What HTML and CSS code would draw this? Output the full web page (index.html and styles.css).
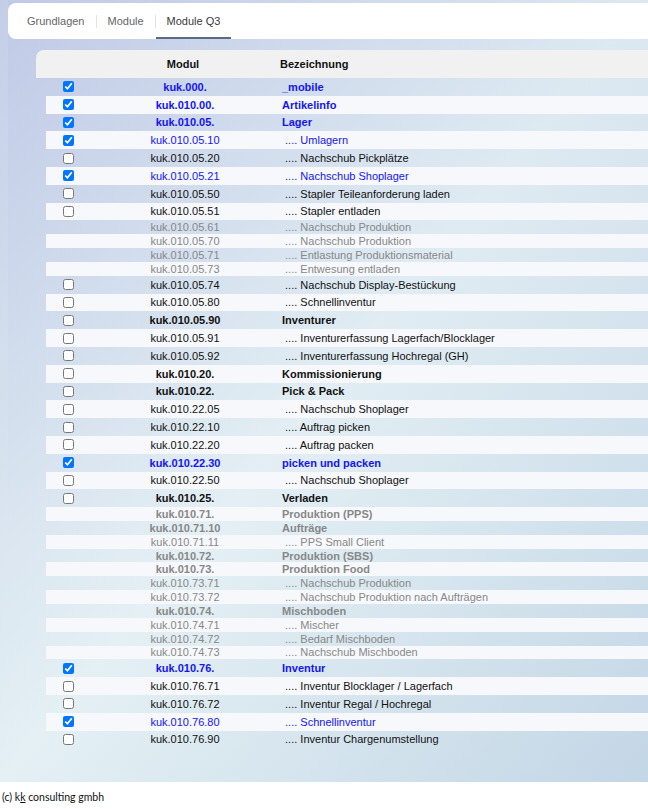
FILE: index.html
```html
<!DOCTYPE html>
<html lang="de">
<head>
<meta charset="utf-8">
<title>Module Q3</title>
<link rel="stylesheet" href="styles.css">
</head>
<body>
<div class="page">
  <div class="main">
    <nav class="tabs">
      <span class="tab">Grundlagen</span>
      <span class="sep"></span>
      <span class="tab">Module</span>
      <span class="sep"></span>
      <span class="tab active">Module Q3</span>
    </nav>

    <div class="thead">
      <div class="c1"></div>
      <div class="c2">Modul</div>
      <div class="c3">Bezeichnung</div>
    </div>

    <div class="tbody">
      <div class="row chk on b"><div class="c1"><input type="checkbox" checked></div><div class="c2">kuk.000.</div><div class="c3">_mobile</div></div>
      <div class="row chk on b"><div class="c1"><input type="checkbox" checked></div><div class="c2">kuk.010.00.</div><div class="c3">Artikelinfo</div></div>
      <div class="row chk on b"><div class="c1"><input type="checkbox" checked></div><div class="c2">kuk.010.05.</div><div class="c3">Lager</div></div>
      <div class="row chk on"><div class="c1"><input type="checkbox" checked></div><div class="c2">kuk.010.05.10</div><div class="c3">&nbsp;.... Umlagern</div></div>
      <div class="row chk"><div class="c1"><input type="checkbox"></div><div class="c2">kuk.010.05.20</div><div class="c3">&nbsp;.... Nachschub Pickplätze</div></div>
      <div class="row chk on"><div class="c1"><input type="checkbox" checked></div><div class="c2">kuk.010.05.21</div><div class="c3">&nbsp;.... Nachschub Shoplager</div></div>
      <div class="row chk"><div class="c1"><input type="checkbox"></div><div class="c2">kuk.010.05.50</div><div class="c3">&nbsp;.... Stapler Teileanforderung laden</div></div>
      <div class="row chk"><div class="c1"><input type="checkbox"></div><div class="c2">kuk.010.05.51</div><div class="c3">&nbsp;.... Stapler entladen</div></div>
      <div class="row off"><div class="c1"></div><div class="c2">kuk.010.05.61</div><div class="c3">&nbsp;.... Nachschub Produktion</div></div>
      <div class="row off"><div class="c1"></div><div class="c2">kuk.010.05.70</div><div class="c3">&nbsp;.... Nachschub Produktion</div></div>
      <div class="row off"><div class="c1"></div><div class="c2">kuk.010.05.71</div><div class="c3">&nbsp;.... Entlastung Produktionsmaterial</div></div>
      <div class="row off"><div class="c1"></div><div class="c2">kuk.010.05.73</div><div class="c3">&nbsp;.... Entwesung entladen</div></div>
      <div class="row chk"><div class="c1"><input type="checkbox"></div><div class="c2">kuk.010.05.74</div><div class="c3">&nbsp;.... Nachschub Display-Bestückung</div></div>
      <div class="row chk"><div class="c1"><input type="checkbox"></div><div class="c2">kuk.010.05.80</div><div class="c3">&nbsp;.... Schnellinventur</div></div>
      <div class="row chk b"><div class="c1"><input type="checkbox"></div><div class="c2">kuk.010.05.90</div><div class="c3">Inventurer</div></div>
      <div class="row chk"><div class="c1"><input type="checkbox"></div><div class="c2">kuk.010.05.91</div><div class="c3">&nbsp;.... Inventurerfassung Lagerfach/Blocklager</div></div>
      <div class="row chk"><div class="c1"><input type="checkbox"></div><div class="c2">kuk.010.05.92</div><div class="c3">&nbsp;.... Inventurerfassung Hochregal (GH)</div></div>
      <div class="row chk b"><div class="c1"><input type="checkbox"></div><div class="c2">kuk.010.20.</div><div class="c3">Kommissionierung</div></div>
      <div class="row chk b"><div class="c1"><input type="checkbox"></div><div class="c2">kuk.010.22.</div><div class="c3">Pick &amp; Pack</div></div>
      <div class="row chk"><div class="c1"><input type="checkbox"></div><div class="c2">kuk.010.22.05</div><div class="c3">&nbsp;.... Nachschub Shoplager</div></div>
      <div class="row chk"><div class="c1"><input type="checkbox"></div><div class="c2">kuk.010.22.10</div><div class="c3">&nbsp;.... Auftrag picken</div></div>
      <div class="row chk"><div class="c1"><input type="checkbox"></div><div class="c2">kuk.010.22.20</div><div class="c3">&nbsp;.... Auftrag packen</div></div>
      <div class="row chk on b"><div class="c1"><input type="checkbox" checked></div><div class="c2">kuk.010.22.30</div><div class="c3">picken und packen</div></div>
      <div class="row chk"><div class="c1"><input type="checkbox"></div><div class="c2">kuk.010.22.50</div><div class="c3">&nbsp;.... Nachschub Shoplager</div></div>
      <div class="row chk b"><div class="c1"><input type="checkbox"></div><div class="c2">kuk.010.25.</div><div class="c3">Verladen</div></div>
      <div class="row off b"><div class="c1"></div><div class="c2">kuk.010.71.</div><div class="c3">Produktion (PPS)</div></div>
      <div class="row off b"><div class="c1"></div><div class="c2">kuk.010.71.10</div><div class="c3">Aufträge</div></div>
      <div class="row off"><div class="c1"></div><div class="c2">kuk.010.71.11</div><div class="c3">&nbsp;.... PPS Small Client</div></div>
      <div class="row off b"><div class="c1"></div><div class="c2">kuk.010.72.</div><div class="c3">Produktion (SBS)</div></div>
      <div class="row off b"><div class="c1"></div><div class="c2">kuk.010.73.</div><div class="c3">Produktion Food</div></div>
      <div class="row off"><div class="c1"></div><div class="c2">kuk.010.73.71</div><div class="c3">&nbsp;.... Nachschub Produktion</div></div>
      <div class="row off"><div class="c1"></div><div class="c2">kuk.010.73.72</div><div class="c3">&nbsp;.... Nachschub Produktion nach Aufträgen</div></div>
      <div class="row off b"><div class="c1"></div><div class="c2">kuk.010.74.</div><div class="c3">Mischboden</div></div>
      <div class="row off"><div class="c1"></div><div class="c2">kuk.010.74.71</div><div class="c3">&nbsp;.... Mischer</div></div>
      <div class="row off"><div class="c1"></div><div class="c2">kuk.010.74.72</div><div class="c3">&nbsp;.... Bedarf Mischboden</div></div>
      <div class="row off"><div class="c1"></div><div class="c2">kuk.010.74.73</div><div class="c3">&nbsp;.... Nachschub Mischboden</div></div>
      <div class="row chk on b"><div class="c1"><input type="checkbox" checked></div><div class="c2">kuk.010.76.</div><div class="c3">Inventur</div></div>
      <div class="row chk"><div class="c1"><input type="checkbox"></div><div class="c2">kuk.010.76.71</div><div class="c3">&nbsp;.... Inventur Blocklager / Lagerfach</div></div>
      <div class="row chk"><div class="c1"><input type="checkbox"></div><div class="c2">kuk.010.76.72</div><div class="c3">&nbsp;.... Inventur Regal / Hochregal</div></div>
      <div class="row chk on"><div class="c1"><input type="checkbox" checked></div><div class="c2">kuk.010.76.80</div><div class="c3">&nbsp;.... Schnellinventur</div></div>
      <div class="row chk"><div class="c1"><input type="checkbox"></div><div class="c2">kuk.010.76.90</div><div class="c3">&nbsp;.... Inventur Chargenumstellung</div></div>
    </div>
  </div>
</div>
<footer class="footer">(c) k<u>k</u> consulting gmbh</footer>
</body>
</html>
```

FILE: styles.css
```css
html, body {
  margin: 0;
  padding: 0;
  overflow: hidden;
}

body {
  font-family: "Liberation Sans", Arial, sans-serif;
  font-size: 11px;
  color: #000;
  background: #fff;
}

.page {
  height: 782px;
  box-sizing: border-box;
  padding-left: 8px;
  background: linear-gradient(to bottom right, #c4cee8 0%, #e4f0f4 50%, #c3d6e6 100%);
}

.main {
  height: 100%;
  box-sizing: border-box;
  padding-top: 3px;
  background: linear-gradient(to bottom, rgba(150, 160, 215, 0.10), rgba(150, 160, 215, 0) 70%);
}

/* tabs */
.tabs {
  display: flex;
  align-items: stretch;
  height: 36px;
  box-sizing: border-box;
  padding-left: 8px;
  background: #fff;
  border-radius: 8px 0 0 8px;
}

.tab {
  display: flex;
  align-items: center;
  padding: 0 11px;
  color: #666;
  box-sizing: border-box;
  border-bottom: 2px solid transparent;
  padding-top: 2px;
}

.tab.active {
  color: #3a3a3a;
  border-bottom-color: #5b6c82;
}

.sep {
  width: 1px;
  height: 13px;
  align-self: center;
  background: #e3e3e3;
}

/* table header */
.thead {
  display: grid;
  grid-template-columns: 44px 190px 1fr;
  align-items: center;
  height: 28px;
  margin-top: 11px;
  margin-left: 28px;
  padding-left: 8px;
  background: #f1f1f1;
  border-radius: 8px 0 0 0;
  font-weight: bold;
  color: #111;
}

.thead .c2 {
  text-align: center;
}

.thead .c3 {
  padding-left: 2px;
}

/* rows */
.tbody {
  margin-left: 38px;
}

.row {
  display: grid;
  grid-template-columns: 44px 190px 1fr;
  align-items: center;
  height: 13.85px;
  color: #888;
  white-space: nowrap;
}

.row.chk {
  height: 17.8px;
  color: #111;
}

.row.on {
  color: #1414f5;
}

.row.b {
  font-weight: bold;
}

.row:nth-child(even) {
  background: #f6f8fc;
}

.row .c1 {
  display: flex;
  justify-content: center;
  align-items: center;
}

.row .c2 {
  text-align: center;
}

.row .c3 {
  padding-left: 2px;
}

.row input {
  width: 11px;
  height: 11px;
  margin: 0;
}

/* footer */
.footer {
  height: 27px;
  box-sizing: border-box;
  padding: 9px 0 0 2px;
  font-family: Lato, "Noto Sans", sans-serif;
  font-size: 10.5px;
  color: #111;
}
```
